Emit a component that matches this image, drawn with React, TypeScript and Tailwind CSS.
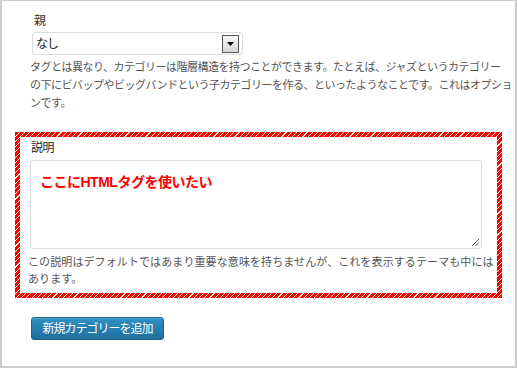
import React from "react";

export default function App() {
  const font = "font-['Liberation_Sans','Noto_Sans_CJK_JP',sans-serif]";
  return (
    <div className={`w-[517px] h-[368px] bg-white border-t border-x-2 border-b-2 border-[#cccccc] box-border ${font}`}>
      <div className="pl-[30px] pr-[10px] pt-[11px]">
        <div className="text-[12px] leading-[18px] text-[#333] pl-[2px]">親</div>
        <div className="mt-[2px] w-[211px] h-[23px] border border-[#dddddd] rounded-[3px] flex items-center justify-between pl-[3px] pr-[3px]">
          <span className="text-[12px] leading-[14px] text-[#222] tracking-[-1px]">なし</span>
          <div className="w-[17px] h-[18px] border border-[#555] bg-[linear-gradient(#f8f8f8,#d6d6d6)] flex items-center justify-center">
            <svg width="7" height="4" viewBox="0 0 7 4"><path d="M0 0H7L3.5 4Z" fill="#000" /></svg>
          </div>
        </div>
        <div className="mt-[3px] text-[11px] leading-[18px] text-[#555] tracking-[-0.5px] whitespace-nowrap -ml-[2px]">
          タグとは異なり、カテゴリーは階層構造を持つことができます。たとえば、ジャズというカテゴリー<br />
          の下にビバップやビッグバンドという子カテゴリーを作る、といったようなことです。これはオプショ<br />
          ンです。
        </div>
      </div>

      <div className="ml-[13px] mt-[20px] w-[487px] h-[166px] p-[5px] bg-[repeating-linear-gradient(135deg,#ff0000_0px,#ff0000_2.9px,#ffe8e8_2.9px,#ffffff_3.7px)]">
        <div className="bg-white w-full h-full pl-[11px] pt-[2px]">
          <div className="text-[12px] leading-[18px] text-[#222] tracking-[-0.5px]">説明</div>
          <div className="relative mt-[3px] -ml-[1px] w-[452px] h-[89px] border border-[#dddddd] rounded-[3px] pl-[9px] pt-[9px]">
            <span className="text-[14px] leading-[18px] font-bold text-[#f00] tracking-[-0.5px]">ここにHTMLタグを使いたい</span>
            <svg className="absolute right-[2px] bottom-[2px]" width="8" height="8" viewBox="0 0 8 8">
              <path d="M1 8L8 1M4.5 8L8 4.5" stroke="#555" strokeWidth="1" />
            </svg>
          </div>
          <div className="mt-[5px] -ml-[3px] text-[11px] leading-[17px] text-[#555] tracking-[0.1px] whitespace-nowrap">
            この説明はデフォルトではあまり重要な意味を持ちませんが、これを表示するテーマも中には<br />
            あります。
          </div>
        </div>
      </div>

      <div className="pl-[29px] mt-[19px]">
        <button className="w-[133px] h-[23px] rounded-[3px] border border-[#1e6287] bg-[linear-gradient(#2e8fc4,#1f6f9c)] text-white text-[12px] leading-[14px] tracking-[-1px] flex items-center justify-center pt-[1px] shadow-[inset_0_1px_0_rgba(120,200,230,0.5)]">
          新規カテゴリーを追加
        </button>
      </div>
    </div>
  );
}
